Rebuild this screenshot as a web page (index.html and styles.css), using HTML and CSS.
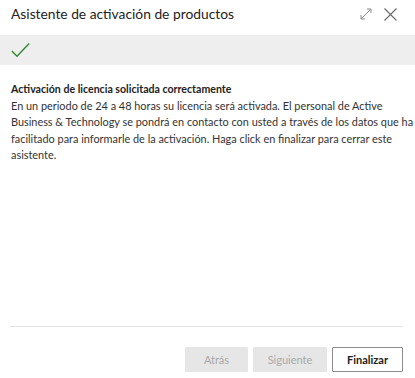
FILE: index.html
```html
<!DOCTYPE html>
<html lang="es">
<head>
<meta charset="utf-8">
<link rel="stylesheet" href="styles.css">
</head>
<body>
<div class="dialog">
  <header class="titlebar">
    <h1 class="title">Asistente de activación de productos</h1>
    <div class="actions">
      <svg class="icon" width="12" height="12" viewBox="0 0 12 12" aria-hidden="true">
        <path d="M1 11 L11 1 M7 1 H11 V5 M1 7 V11 H5" fill="none" stroke="#8a8a8a" stroke-width="1"/>
      </svg>
      <svg class="icon close" width="13" height="13" viewBox="0 0 13 13" aria-hidden="true">
        <path d="M0.5 0.5 L12.5 12.5 M12.5 0.5 L0.5 12.5" fill="none" stroke="#6e6e6e" stroke-width="1.2"/>
      </svg>
    </div>
  </header>
  <div class="status">
    <svg width="19" height="16" viewBox="0 0 19 16" aria-hidden="true">
      <path d="M0.8 9 L6 14.3 L18.2 1.6" fill="none" stroke="#2e8b2e" stroke-width="1.4"/>
    </svg>
  </div>
  <main class="content">
    <h2 class="heading">Activación de licencia solicitada correctamente</h2>
    <p class="body">En un periodo de 24 a 48 horas su licencia será activada. El personal de Active Business &amp; Technology se pondrá en contacto con usted a través de los datos que ha facilitado para informarle de la activación. Haga click en finalizar para cerrar este asistente.</p>
  </main>
  <footer class="footer">
    <button class="btn btn-back" disabled>Atrás</button>
    <button class="btn btn-next" disabled>Siguiente</button>
    <button class="btn btn-primary">Finalizar</button>
  </footer>
</div>
</body>
</html>
```
FILE: styles.css
```css
html, body {
  margin: 0;
  padding: 0;
  background: #ffffff;
}
body {
  font-family: Lato, "Open Sans", sans-serif;
  color: #262626;
}
.dialog {
  width: 415px;
  height: 378px;
  display: flex;
  flex-direction: column;
}
.titlebar {
  height: 35px;
  display: flex;
  align-items: flex-start;
  justify-content: space-between;
  padding: 5px 18px 0 11px;
  box-sizing: border-box;
}
.title {
  margin: 0;
  font-size: 13.8px;
  line-height: 18px;
  font-weight: 400;
  color: #222;
}
.actions {
  display: flex;
  align-items: center;
  gap: 12px;
  height: 16px;
  padding-top: 1px;
}
.icon { display: block; }
.status {
  height: 30px;
  background: #eeeeee;
  display: flex;
  align-items: center;
  padding-left: 11px;
}
.status svg { display: block; }
.content {
  flex: 1;
  padding: 17px 0 0 11px;
}
.heading {
  margin: 0;
  font-size: 10.6px;
  line-height: 14px;
  font-weight: 700;
  color: #222;
}
.body {
  margin: 2px 0 0 0;
  font-size: 10.9px;
  line-height: 16.4px;
  color: #333;
}
.footer {
  margin: 0 12px 0 10px;
  border-top: 1px solid #e3e3e3;
  height: 45px;
  display: flex;
  justify-content: flex-end;
  align-items: flex-end;
  gap: 5px;
  padding-bottom: 6px;
}
.btn {
  font-family: inherit;
  font-size: 11px;
  height: 25px;
  padding: 0;
  border: 1px solid #e6e6e6;
  background: #e6e6e6;
  color: #a8a8a8;
  border-radius: 1px;
}
.btn-back { width: 63px; }
.btn-next { width: 74px; }
.btn-primary {
  width: 71px;
  background: #ffffff;
  border: 1px solid #8a8a8a;
  color: #222;
  font-weight: 700;
}
```
